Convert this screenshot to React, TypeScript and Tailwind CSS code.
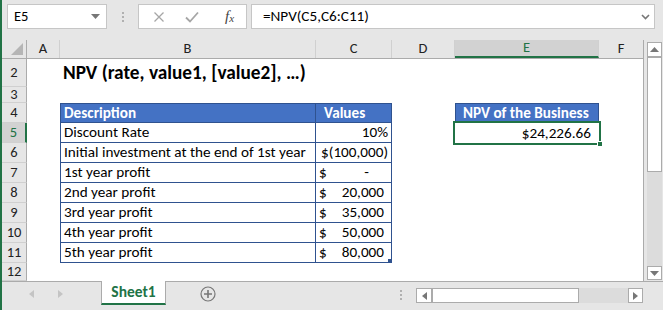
import React from "react";

const FONT = { fontFamily: "Calibri, Carlito, Lato, 'Liberation Sans', sans-serif" };

const cols = ["A", "B", "C", "D", "E", "F"];

type Row = { n: number; h: string };
const rows: Row[] = [
  { n: 2, h: "h-[28px]" },
  { n: 3, h: "h-[16px]" },
  { n: 4, h: "h-[20px]" },
  { n: 5, h: "h-[20px]" },
  { n: 6, h: "h-[20px]" },
  { n: 7, h: "h-[20px]" },
  { n: 8, h: "h-[20px]" },
  { n: 9, h: "h-[20px]" },
  { n: 10, h: "h-[20px]" },
  { n: 11, h: "h-[20px]" },
  { n: 12, h: "h-[18px]" },
];

const colW = ["w-[33px]", "w-[256px]", "w-[76px]", "w-[63px]", "w-[144px]", "w-[44px]"];

const tableRows: { desc: string; kind: "pct" | "neg" | "dash" | "num"; v?: string }[] = [
  { desc: "Discount Rate", kind: "pct", v: "10%" },
  { desc: "Initial investment at the end of 1st year", kind: "neg", v: "$(100,000)" },
  { desc: "1st year profit", kind: "dash" },
  { desc: "2nd year profit", kind: "num", v: "20,000" },
  { desc: "3rd year profit", kind: "num", v: "35,000" },
  { desc: "4th year profit", kind: "num", v: "50,000" },
  { desc: "5th year profit", kind: "num", v: "80,000" },
];

function ValueCell({ r }: { r: (typeof tableRows)[number] }) {
  if (r.kind === "pct" || r.kind === "neg")
    return <div className="flex h-full items-center justify-end pr-[3px]">{r.v}</div>;
  if (r.kind === "dash")
    return (
      <div className="flex h-full items-center justify-between pl-[3px] pr-[22px]">
        <span>$</span>
        <span>-</span>
      </div>
    );
  return (
    <div className="flex h-full items-center justify-between pl-[3px] pr-[7px]">
      <span>$</span>
      <span>{r.v}</span>
    </div>
  );
}

function CellContent({ row, col }: { row: number; col: string }) {
  if (row === 2 && col === "B")
    return (
      <div className="absolute left-[3px] top-0 flex h-full items-center whitespace-nowrap text-[19.3px] font-bold text-black">
        NPV (rate, value1, [value2], …)
      </div>
    );
  if (row === 4 && col === "B")
    return <div className="flex h-full items-center pl-[3px] font-bold text-white">Description</div>;
  if (row === 4 && col === "C")
    return <div className="flex h-full items-center pl-[8px] font-bold text-white">Values</div>;
  if (row === 4 && col === "E")
    return <div className="flex h-full items-center pl-[7px] font-bold text-white">NPV of the Business</div>;
  if (row === 5 && col === "E")
    return (
      <>
        <div className="flex h-full items-center justify-end pr-[8px]">$24,226.66</div>
        <div className="pointer-events-none absolute -inset-[2px] border-2 border-[#217346]" />
        <div className="absolute -bottom-[4px] -right-[4px] h-[6px] w-[6px] border border-white bg-[#217346]" />
      </>
    );
  if (row >= 5 && row <= 11) {
    const r = tableRows[row - 5];
    if (col === "B") return <div className="flex h-full items-center whitespace-nowrap pl-[3px]">{r.desc}</div>;
    if (col === "C")
      return (
        <>
          <ValueCell r={r} />
          {row === 11 && <div className="absolute -bottom-[1px] -right-[1px] h-[4px] w-[4px] bg-[#2f528f]" />}
        </>
      );
  }
  return null;
}

function cellClass(row: number, col: string) {
  const inTable = row >= 4 && row <= 11 && (col === "B" || col === "C");
  const npv = (row === 4 || row === 5) && col === "E";
  let c = "relative ";
  if (inTable) {
    c += "border-b border-r border-[#2f528f] ";
    if (col === "B") c += "border-l ";
    if (row === 4) c += "border-t bg-[#4472c4] ";
  } else if (npv && row === 4) {
    c += "border border-[#2f528f] bg-[#4472c4] ";
  }
  return c;
}

export default function App() {
  return (
    <div className="relative h-[310px] w-[663px] overflow-hidden border-l-2 border-[#217346] bg-[#e6e6e6] text-[15.2px] text-black" style={FONT}>
      {/* formula bar */}
      <div className="flex h-[40px] items-start pt-[4px]">
        <div className="ml-[5px] flex h-[25px] w-[100px] items-center justify-between border border-[#c6c6c6] bg-white pl-[6px] pr-[6px]">
          <span className="text-[14.5px]">E5</span>
          <svg width="9" height="5" viewBox="0 0 9 5">
            <path d="M0 0 L9 0 L4.5 5 Z" fill="#777" />
          </svg>
        </div>
        <div className="flex h-[25px] w-[31px] flex-col items-center justify-center gap-[2px]">
          <span className="h-[2px] w-[2px] bg-[#b0b0b0]" />
          <span className="h-[2px] w-[2px] bg-[#b0b0b0]" />
          <span className="h-[2px] w-[2px] bg-[#b0b0b0]" />
        </div>
        <div className="flex h-[25px] w-[109px] items-center border border-[#c6c6c6] bg-white">
          <div className="flex w-[40px] justify-center">
            <svg width="12" height="12" viewBox="0 0 12 12">
              <path d="M1.5 1.5 L10.5 10.5 M10.5 1.5 L1.5 10.5" stroke="#a6a6a6" strokeWidth="1.3" />
            </svg>
          </div>
          <div className="flex w-[26px] justify-center">
            <svg width="14" height="12" viewBox="0 0 14 12">
              <path d="M1 6.5 L5 10.5 L13 1.5" stroke="#a6a6a6" strokeWidth="1.8" fill="none" />
            </svg>
          </div>
          <div className="flex flex-1 items-center justify-center pl-[8px] text-[15px] italic text-[#444]" style={{ fontFamily: "'Liberation Serif', serif" }}>
            f<span className="mt-[3px] text-[11px]">x</span>
          </div>
        </div>
        <div className="ml-[4px] flex h-[25px] w-[404px] items-center justify-between border border-[#c6c6c6] bg-white pl-[11px] pr-[4px]">
          <span className="text-[15.2px]">=NPV(C5,C6:C11)</span>
          <svg width="9" height="6" viewBox="0 0 9 6">
            <path d="M1 1 L4.5 4.5 L8 1" stroke="#777" strokeWidth="1.6" fill="none" />
          </svg>
        </div>
      </div>

      {/* sheet + vertical scrollbar */}
      <div className="flex h-[241px]">
        <div className="flex w-[641px] flex-col bg-white">
          {/* column headers */}
          <div className="flex h-[19px] border-b border-[#ababab] bg-[#e6e6e6]">
            <div className="relative w-[25px] border-r border-[#ababab]">
              <svg className="absolute bottom-[3px] right-[3px]" width="12" height="12" viewBox="0 0 12 12">
                <path d="M12 0 L12 12 L0 12 Z" fill="#b5b5b5" />
              </svg>
            </div>
            {cols.map((c, i) => (
              <div
                key={c}
                className={`${colW[i]} flex items-center justify-center text-[14.5px] ${
                  c === "E" ? "border-b-2 border-b-[#217346] bg-[#d2d2d2] text-[#217346]" : "text-[#222]"
                } ${c !== "F" ? "border-r border-r-[#d0d0d0]" : ""}`}
              >
                {c}
              </div>
            ))}
          </div>
          {rows.map((r) => (
            <div key={r.n} className={`flex ${r.h}`}>
              <div
                className={`flex w-[25px] items-center justify-center border-b border-[#d0d0d0] text-[14.5px] ${
                  r.n === 5
                    ? "border-r-2 border-r-[#217346] bg-[#d2d2d2] text-[#217346]"
                    : "border-r border-r-[#ababab] bg-[#e6e6e6] text-[#222]"
                }`}
              >
                {r.n}
              </div>
              {cols.map((c, i) => (
                <div key={c} className={`${colW[i]} ${cellClass(r.n, c)}`}>
                  <CellContent row={r.n} col={c} />
                </div>
              ))}
            </div>
          ))}
        </div>
        {/* vertical scrollbar */}
        <div className="flex w-[20px] flex-col border-l border-[#ababab] bg-[#e6e6e6] pl-[3px] pr-px pt-[2px]">
          <div className="flex h-[15px] items-center justify-center border border-[#ababab] bg-white">
            <svg width="9" height="5" viewBox="0 0 9 5">
              <path d="M0 5 L9 5 L4.5 0 Z" fill="#777" />
            </svg>
          </div>
          <div className="flex flex-1 flex-col bg-[#dcdcdc]">
            <div className="h-[115px] border border-[#ababab] bg-white" />
            <div className="flex-1" />
          </div>
          <div className="mb-[1px] flex h-[14px] items-center justify-center border border-[#ababab] bg-white">
            <svg width="9" height="5" viewBox="0 0 9 5">
              <path d="M0 0 L9 0 L4.5 5 Z" fill="#777" />
            </svg>
          </div>
        </div>
      </div>

      {/* sheet tabs + horizontal scrollbar */}
      <div className="flex h-[29px] items-start border-t border-[#ababab]">
        <div className="flex h-[24px] w-[99px] items-center">
          <svg className="ml-[27px]" width="5" height="8" viewBox="0 0 5 8">
            <path d="M5 0 L5 8 L0 4 Z" fill="#c4c4c4" />
          </svg>
          <svg className="ml-[24px]" width="5" height="8" viewBox="0 0 5 8">
            <path d="M0 0 L0 8 L5 4 Z" fill="#c4c4c4" />
          </svg>
        </div>
        <div className="-mt-px flex h-[24px] w-[65px] items-center justify-center border-x border-b-2 border-[#ababab] border-b-[#217346] bg-white text-[15.5px] font-bold text-[#217346]">
          Sheet1
        </div>
        <div className="flex h-[24px] w-[84px] items-center justify-center">
          <svg width="16" height="16" viewBox="0 0 16 16">
            <circle cx="8" cy="8" r="7" stroke="#777" strokeWidth="1.2" fill="none" />
            <path d="M8 4 V12 M4 8 H12" stroke="#777" strokeWidth="1.6" />
          </svg>
        </div>
        <div className="ml-[150px] mt-[8px] flex flex-col gap-[2px]">
          <span className="h-[2px] w-[2px] bg-[#b0b0b0]" />
          <span className="h-[2px] w-[2px] bg-[#b0b0b0]" />
          <span className="h-[2px] w-[2px] bg-[#b0b0b0]" />
        </div>
        <div className="ml-[14px] mt-[6px] flex h-[15px] w-[227px] bg-[#dcdcdc]">
          <div className="flex w-[16px] items-center justify-center border border-[#ababab] bg-white">
            <svg width="5" height="8" viewBox="0 0 5 8">
              <path d="M5 0 L5 8 L0 4 Z" fill="#777" />
            </svg>
          </div>
          <div className="w-[147px] border border-[#ababab] bg-white" />
          <div className="flex-1" />
          <div className="flex w-[15px] items-center justify-center border border-[#ababab] bg-white">
            <svg width="5" height="8" viewBox="0 0 5 8">
              <path d="M0 0 L0 8 L5 4 Z" fill="#777" />
            </svg>
          </div>
        </div>
      </div>
    </div>
  );
}
